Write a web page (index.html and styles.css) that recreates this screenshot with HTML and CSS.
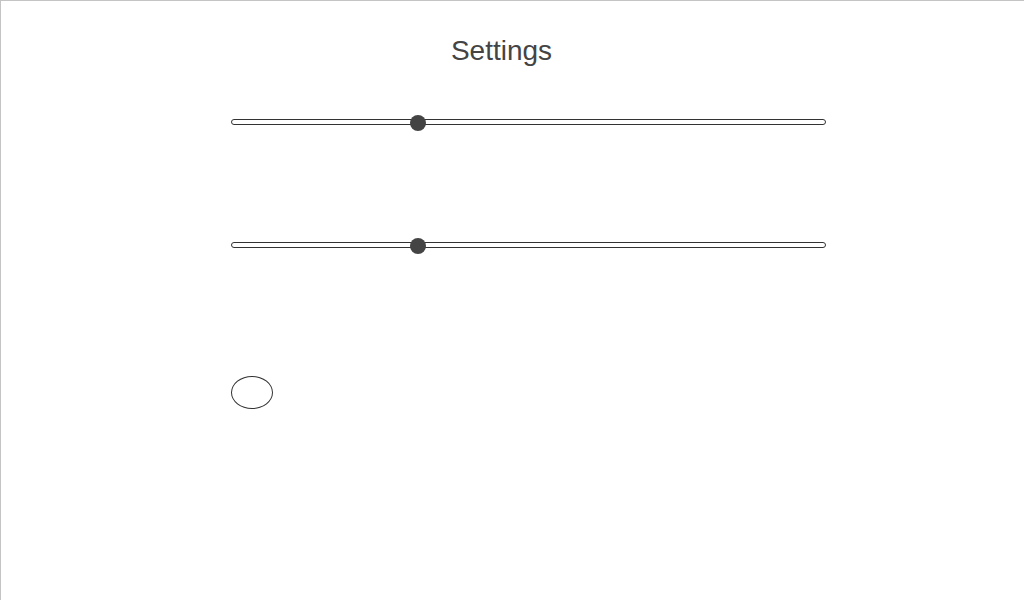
FILE: index.html
```html
<!DOCTYPE html>
<html lang="en">
<head>
<meta charset="utf-8">
<title>Settings</title>
<link rel="stylesheet" href="styles.css">
</head>
<body>
<div class="page">
  <h1 class="title">Settings</h1>
  <div class="controls">
    <div class="slider" role="slider" aria-valuenow="31">
      <div class="track"></div>
      <div class="thumb" style="left: 179px"></div>
    </div>
    <div class="slider second" role="slider" aria-valuenow="31">
      <div class="track"></div>
      <div class="thumb" style="left: 179px"></div>
    </div>
    <button class="toggle" type="button" aria-label="toggle"></button>
  </div>
</div>
</body>
</html>
```
FILE: styles.css
```css
html, body {
  margin: 0;
  padding: 0;
  height: 100%;
  background: #fff;
}
body {
  overflow: hidden;
  font-family: "Liberation Sans", Arial, sans-serif;
}
.page {
  box-sizing: border-box;
  width: 1040px;
  height: 100%;
  border-top: 1px solid #c4c4c4;
  border-left: 1px solid #c4c4c4;
  padding-top: 34px;
}
.title {
  width: 1001px;
  margin: 0;
  text-align: center;
  font-size: 28px;
  line-height: 32px;
  font-weight: normal;
  color: #444;
}
.controls {
  display: flex;
  flex-direction: column;
  align-items: flex-start;
  padding-left: 230px;
  padding-top: 48px;
}
.slider {
  position: relative;
  width: 595px;
  height: 16px;
}
.slider.second {
  margin-top: 107px;
}
.track {
  box-sizing: border-box;
  margin-top: 4px;
  height: 6px;
  border: 1px solid #333;
  border-radius: 3px;
  background: #fff;
}
.thumb {
  position: absolute;
  top: 0;
  width: 16px;
  height: 16px;
  border-radius: 50%;
  background: #444;
}
.toggle {
  box-sizing: border-box;
  margin-top: 122px;
  width: 42px;
  height: 33px;
  padding: 0;
  border: 1px solid #333;
  border-radius: 50%;
  background: #fff;
}
```
